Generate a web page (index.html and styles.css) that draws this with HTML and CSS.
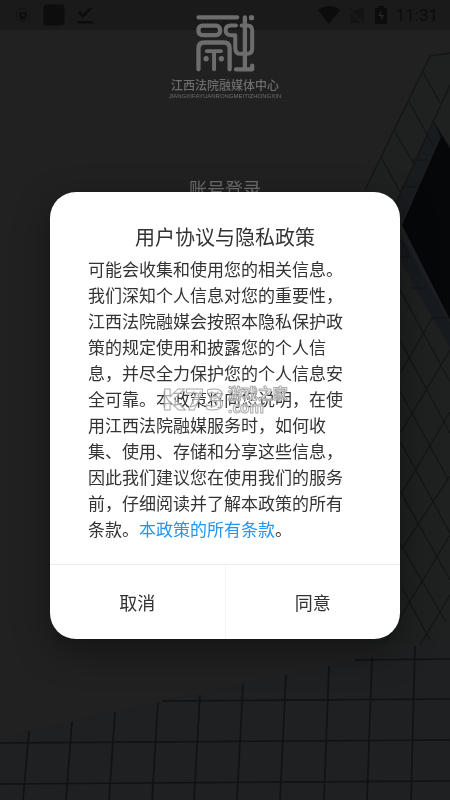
FILE: index.html
```
<!DOCTYPE html>
<html lang="zh-CN">

<head>
    <meta charset="utf-8">
    <meta name="viewport" content="width=device-width, initial-scale=1.0">
    <title>江西法院融媒体中心</title>
    <link rel="stylesheet" href="styles.css">
</head>

<body>
    <!-- building backdrop -->
    <svg class="backdrop" viewBox="0 0 450 800" preserveAspectRatio="xMidYMid slice" aria-hidden="true">
        <path fill="#1f2121" d="M450 53 430 56 365 190 365 650 450 640z"/>
        <path fill="#191c1e" d="M433 121 441 137 402 222 397 202z"/>
        <path fill="#171b1f" d="M401 235 450 322V348L401 262z"/>
        <path fill="#060708" d="M433 121 450 148V320L402 225 441 137z"/>
        <g fill="none" stroke="#141616" stroke-width="1.3">
            <path d="M450 53 430 56 365 190M450 85 395 205M422 70 440 103M408 100 433 145M394 130 415 166M381 157 400 192"/>
            <path d="M433 121 450 148M413 160H428M401 187H417M401 257H410L401 240M412 288H427M431 318H447"/>
            <path d="M400 290 450 382M400 340 450 433M400 391 448 479M400 441 450 533M400 491 450 580M400 543 446 622M402 588 430 640"/>
            <path d="M401 372 432 318M401 432 450 350M401 494 450 412M401 550 450 476M385 643 450 535M420 645 450 595"/>
        </g>
        <path fill="#1e2022" d="M0 738 28 731 157 702 285 675 414 646 450 640V800H0z"/>
        <g fill="none" stroke="#101213" stroke-width="1.6">
            <path d="M29 731 23 800M72 722 66 800M115 712 109 800M158 703 152 800M200 695 194 800M243 685 237 800M286 675 280 800M329 666 324 800M372 657 367 800M415 646 411 800"/>
            <path d="M355 660 450 659M162 701 450 699M0 743 450 740M0 784 450 781"/>
        </g>
    </svg>

    <div class="statusbar">
        <div class="notices">
            <svg width="16" height="16" viewBox="0 0 16 16"><circle cx="8" cy="8" r="6.500" fill="none" stroke="#141414"/><path d="M4 5h8v3q0 3-4 5-4-2-4-5z" fill="#0e0e0e"/><circle cx="8" cy="8" r="1.500" fill="#1a1a1a"/></svg>
            <svg width="22" height="22" viewBox="0 0 22 22"><rect x="0.500" y="0.500" width="21" height="21" rx="4" fill="#0d0d0d"/></svg>
            <svg width="16" height="18" viewBox="0 0 16 18"><path d="M2 6l4 4L14 2" fill="none" stroke="#0d0d0d" stroke-width="2.500"/><path d="M0 15h16v2.500H0z" fill="#0d0d0d"/></svg>
        </div>
        <div class="system">
            <svg width="22" height="18" viewBox="0 0 22 18"><path d="M0 4Q11-4 22 4L11 18z" fill="#0c0c0c"/></svg>
            <svg width="17" height="18" viewBox="0 0 17 18"><path d="M15 1v13L5 5zM2 7l10 10H1V8z" fill="#141414"/><path d="M1 2l15 15" stroke="#141414" stroke-width="1.500"/></svg>
            <svg width="12" height="18" viewBox="0 0 12 18"><path d="M3 2V0h6v2h3v16H0V2z" fill="#0c0c0c"/><path d="M7 4L3 10h3v5l3-6H6z" fill="#242424"/></svg>
            <span class="time">11:31</span>
        </div>
    </div>

    <div class="login">
        <svg class="logo" viewBox="135 40 180 175" role="img" aria-label="融">
            <g fill="none" stroke="#6d6d6d" stroke-width="13" stroke-linecap="round" stroke-linejoin="round">
                <path d="M145 50H262M285 50V205M258 207H307V196"/>
                <rect x="145" y="75" width="65" height="29" rx="12"/>
                <path d="M145 207V144Q145 126 162 126H222Q239 126 239 144V207"/>
                <path d="M258 75H242Q227 75 227 89T242 104H256V143Q256 160 272 160H292Q307 160 307 145V90Q307 75 292 75H275" stroke-width="12"/>
                <path d="M170 152H213M192 152V207" stroke-width="12"/>
            </g>
            <g fill="#6d6d6d">
                <circle cx="305" cy="51" r="8"/>
                <circle cx="168" cy="175" r="8"/>
                <circle cx="214" cy="175" r="8"/>
            </g>
        </svg>
        <div class="name">江西法院融媒体中心</div>
        <div class="pinyin">JIANGXIFAYUANRONGMEITIZHONGXIN</div>
        <div class="tab">账号登录</div>
    </div>

    <div class="overlay">
        <div class="dialog" role="dialog" aria-labelledby="title">
            <h1 id="title">用户协议与隐私政策</h1>
            <p>可能会收集和使用您的相关信息。我们深知个人信息对您的重要性，江西法院融媒会按照本隐私保护政策的规定使用和披露您的个人信息，并尽全力保护您的个人信息安全可靠。本政策将向您说明，在使用江西法院融媒服务时，如何收集、使用、存储和分享这些信息，因此我们建议您在使用我们的服务前，仔细阅读并了解本政策的所有条款。<a href="#">本政策的所有条款</a>。</p>
            <div class="actions">
                <button type="button">取消</button>
                <button type="button">同意</button>
            </div>
            <div class="watermark">
                <span class="mark">K73</span>
                <span class="site"><span>游戏之家</span><span>.com</span></span>
            </div>
        </div>
    </div>
</body>

</html>
```
FILE: styles.css
```
* {
    box-sizing: border-box;
}

body {
    margin: 0;
    min-height: 100vh;
    background: #212121;
    font-family: "Noto Sans CJK SC", sans-serif;
    overflow: hidden;
}

.backdrop {
    position: fixed;
    inset: 0;
    width: 100%;
    height: 100%;
}

.statusbar {
    position: fixed;
    top: 0;
    left: 0;
    right: 0;
    height: 30px;
    padding: 0 12px 0 15px;
    display: flex;
    justify-content: space-between;
    align-items: center;
    background: #1a1a1a;
}

.notices,
.system {
    display: flex;
    align-items: center;
    gap: 12px;
}

.notices svg,
.system svg {
    display: block;
}

.system {
    gap: 9px;
}

.time {
    font-family: Roboto, sans-serif;
    font-size: 17px;
    color: #0c0c0c;
}

.login {
    position: relative;
    display: flex;
    flex-direction: column;
    align-items: center;
    padding-top: 14px;
    color: #6d6d6d;
}

.logo {
    width: 60px;
    height: 58px;
}

.name {
    margin-top: 6px;
    font-size: 12px;
    font-weight: 500;
    line-height: 14px;
}

.pinyin {
    font-family: "Liberation Sans", sans-serif;
    font-size: 6px;
    line-height: 8px;
}

.tab {
    margin-top: 76px;
    font-size: 18px;
    line-height: 24px;
}

/* policy dialog */
.overlay {
    position: fixed;
    inset: 0;
    padding: 30px 50px 0;
    display: flex;
    align-items: center;
    justify-content: center;
}

.dialog {
    position: relative;
    width: 100%;
    max-width: 400px;
    background: #fff;
    border-radius: 26px;
    overflow: hidden;
    color: #333;
    box-shadow: 0 12px 36px rgba(0, 0, 0, .4);
}

.dialog h1 {
    margin: 30px 0 4px;
    font-size: 20px;
    font-weight: normal;
    line-height: 30px;
    text-align: center;
}

.dialog p {
    margin: 0;
    padding: 0 48px 22px 38px;
    font-size: 17px;
    line-height: 26px;
}

.dialog a {
    color: #2196f3;
    text-decoration: none;
}

.actions {
    display: flex;
    border-top: 1px solid #ececec;
}

.actions button {
    flex: 1;
    padding: 24px 0;
    border: 0;
    background: none;
    font-family: inherit;
    font-size: 18px;
    line-height: 26px;
    color: #333;
    cursor: pointer;
}

.actions button + button {
    border-left: 1px solid #f4f4f4;
}

/* site mark lying over the text */
.watermark {
    position: absolute;
    top: 193px;
    left: 112px;
    display: flex;
    align-items: center;
    gap: 3px;
    color: rgba(255, 255, 255, .6);
    -webkit-text-stroke: 1px #aaa;
    pointer-events: none;
}

.mark {
    font-family: "DejaVu Sans", sans-serif;
    font-size: 29px;
    font-weight: bold;
    line-height: 30px;
}

.site {
    display: flex;
    flex-direction: column;
    font-size: 15px;
    font-weight: bold;
    line-height: 14px;
}
```
